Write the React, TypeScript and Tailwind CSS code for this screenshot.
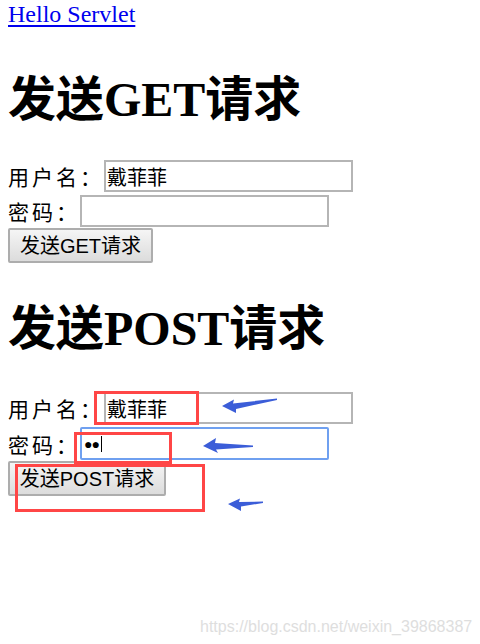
const serif = "font-['Liberation_Serif','Noto_Sans_CJK_SC',serif]";
const control = "font-['Liberation_Sans','Noto_Sans_CJK_SC',sans-serif]";

function Label({ text }: { text: string }) {
  return (
    <span className="text-[21px] leading-[24px] tracking-[3px] text-black font-['Noto_Sans_CJK_SC',sans-serif]">
      {text}
    </span>
  );
}

function TextBox({ value, type = "text" }: { value?: string; type?: string }) {
  return (
    <input
      type={type}
      defaultValue={value}
      readOnly
      className={`h-[32px] w-[249px] border-2 border-[#b5b5b5] bg-white px-[1px] text-[20px] text-black outline-none ${control}`}
    />
  );
}

function PlainButton({ label, width }: { label: string; width: string }) {
  return (
    <button
      type="button"
      className={`h-[35px] ${width} rounded-[2px] border-2 border-[#adadad] bg-gradient-to-b from-[#f5f5f5] to-[#dcdcdc] text-center text-[20px] leading-none text-black ${control}`}
    >
      {label}
    </button>
  );
}

function Arrows() {
  return (
    <svg
      className="pointer-events-none absolute left-0 top-0"
      width="480"
      height="644"
      viewBox="0 0 480 644"
    >
      <g fill="#3b5dd8">
        <polygon points="222,406 234,399.5 233,403.5 277,398.5 277,400 236,409 236,413" />
        <polygon points="203,446 216,438 215,443 253,445.5 253,447 216,449.5 218,453" />
        <polygon points="228,504 240,498.5 239,502 263,501.5 263,503 241,506.5 241,511" />
      </g>
    </svg>
  );
}

export default function App() {
  return (
    <div className={`relative h-[644px] w-[480px] overflow-hidden bg-white px-[8px] ${serif}`}>
      <div className="h-[28px] text-[24px] leading-[28px]">
        <a href="#" className="text-[#0000ee] underline underline-offset-[3px]">
          Hello Servlet
        </a>
      </div>

      <h1 className="mt-[44px] text-[48px] font-bold leading-[56px] text-black">
        发送GET请求
      </h1>
      <div className="mt-[32px] flex h-[32px] items-center">
        <Label text="用户名：" />
        <TextBox value="戴菲菲" />
      </div>
      <div className="mt-[3px] flex h-[32px] items-center">
        <Label text="密码：" />
        <TextBox />
      </div>
      <div className="mt-[1px]">
        <PlainButton label="发送GET请求" width="w-[145px]" />
      </div>

      <h1 className="mt-[38px] text-[48px] font-bold leading-[56px] text-black">
        发送POST请求
      </h1>
      <div className="mt-[35px] flex h-[32px] items-center">
        <Label text="用户名：" />
        <TextBox value="戴菲菲" />
      </div>
      <div className="mt-[3px] flex h-[33px] items-center">
        <Label text="密码：" />
        <div className="relative flex h-[33px] w-[249px] items-center rounded-[2px] border-2 border-[#6fa0f0] bg-white pl-[2px]">
          <span className={`text-[14px] leading-none tracking-[-1px] text-black ${control}`}>●●</span>
          <span className="ml-[2px] h-[16px] w-[1px] bg-black" />
        </div>
      </div>
      <div className="mt-[1px]">
        <PlainButton label="发送POST请求" width="w-[158px]" />
      </div>

      <div className="pointer-events-none absolute left-[94px] top-[391px] h-[34px] w-[105px] border-[3px] border-[#ff4646]" />
      <div className="pointer-events-none absolute left-[74px] top-[432px] h-[32px] w-[98px] border-[3px] border-[#ff4646]" />
      <div className="pointer-events-none absolute left-[15px] top-[464px] h-[48px] w-[190px] border-[3px] border-[#ff4646]" />

      <Arrows />

      <div className={`absolute left-[200px] top-[617px] text-[16px] leading-[20px] text-[#dedede] ${control}`}>
        https://blog.csdn.net/weixin_39868387
      </div>
    </div>
  );
}
